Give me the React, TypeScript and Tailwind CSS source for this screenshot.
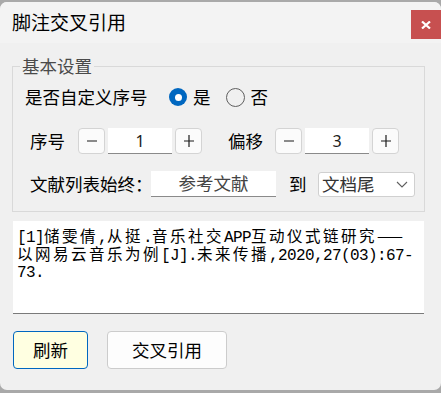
import React from 'react';

const ui = { fontFamily: '"Noto Sans CJK SC", "Microsoft YaHei", sans-serif' };

// SimSun-like: half-width Latin is monospaced, CJK full-width (18px advance)
function RefLine({ text }: { text: string }) {
  const runs = text.match(/[\x20-\x7e]+|[^\x20-\x7e]+/g) || [];
  return (
    <div className="whitespace-nowrap h-[17.5px] leading-[17.5px]">
      {runs.map((r, i) =>
        /^[\x20-\x7e]/.test(r) ? (
          <span
            key={i}
            className="text-[16px] tracking-[-0.6px]"
            style={{ fontFamily: '"Liberation Mono", monospace' }}
          >
            {r}
          </span>
        ) : (
          <span
            key={i}
            className="text-[15.5px] tracking-[2.5px]"
            style={{ fontFamily: '"Noto Sans CJK SC", sans-serif' }}
          >
            {r}
          </span>
        )
      )}
    </div>
  );
}

function StepButton({ sign }: { sign: '-' | '+' }) {
  return (
    <button className="w-[27px] h-[26px] rounded-[4px] border border-[#d4d4d4] bg-[#fbfbfb] flex items-center justify-center">
      <svg width="14" height="14" viewBox="0 0 14 14">
        <line x1="2" y1="7" x2="12" y2="7" stroke="#1b1b1b" strokeWidth="1.2" />
        {sign === '+' && <line x1="7" y1="1" x2="7" y2="13" stroke="#1b1b1b" strokeWidth="1.2" />}
      </svg>
    </button>
  );
}

function NumberBox({ value }: { value: string }) {
  return (
    <div
      className="w-[64px] h-[26px] bg-white border-b border-[#8a8a8a] flex items-center justify-center text-[16px] text-[#1b1b1b]"
      style={{ fontFamily: '"Noto Sans", sans-serif' }}
    >
      {value}
    </div>
  );
}

export default function App() {
  return (
    <div className="w-[441px] h-[393px] bg-[#a9a9a9] pt-[2px] overflow-hidden" style={ui}>
      <div className="w-[441px] h-[388px] rounded-[7px] bg-[#f0f0f0] overflow-hidden flex flex-col">
        {/* title bar */}
        <div className="h-[41px] bg-[#f3f3f3] flex justify-between shrink-0">
          <div className="pl-[12px] flex items-center text-[19px] text-black">脚注交叉引用</div>
          <div className="mt-[8px] w-[30px] h-[29px] bg-[#c75050] flex items-center justify-center">
            <svg width="10" height="8" viewBox="0 0 10 8">
              <path d="M1 0.5 L9 7.5 M9 0.5 L1 7.5" stroke="#fff" strokeWidth="2.2" />
            </svg>
          </div>
        </div>

        {/* group box */}
        <fieldset className="ml-[12px] mt-[11px] w-[413px] border border-[#d9d9d9] px-0 pb-[14px] pt-[6px] m-0">
          <legend className="ml-[7px] px-[2px] text-[17.5px] leading-[24px] text-[#4a4a4a]">基本设置</legend>

          <div className="h-[26px] flex items-center text-[17.5px] text-black">
            <span className="ml-[12px] w-[144px]">是否自定义序号</span>
            <span className="w-[18px] h-[18px] rounded-full bg-[#0067c0] flex items-center justify-center">
              <span className="w-[7px] h-[7px] rounded-full bg-white" />
            </span>
            <span className="ml-[6px]">是</span>
            <span className="ml-[15px] w-[19px] h-[19px] rounded-full border border-[#5f5f5f]" />
            <span className="ml-[6px]">否</span>
          </div>

          <div className="h-[26px] mt-[18px] flex items-center text-[17.5px] text-black">
            <span className="ml-[17px] w-[48px]">序号</span>
            <StepButton sign="-" />
            <div className="ml-[3px]"><NumberBox value="1" /></div>
            <div className="ml-[3px]"><StepButton sign="+" /></div>
            <span className="ml-[26px] w-[47px]">偏移</span>
            <StepButton sign="-" />
            <div className="ml-[3px]"><NumberBox value="3" /></div>
            <div className="ml-[3px]"><StepButton sign="+" /></div>
          </div>

          <div className="h-[26px] mt-[17px] flex items-center text-[17.5px] text-black">
            <span className="ml-[17px] w-[121px] whitespace-nowrap">文献列表始终：</span>
            <div className="w-[125px] h-[26px] bg-white border-b border-[#8a8a8a] flex items-center justify-center text-[#444]">
              参考文献
            </div>
            <span className="ml-[13px] w-[29px]">到</span>
            <div className="w-[97px] h-[25px] bg-white border border-[#d0d0d0] rounded-[3px] flex items-center justify-between pl-[3px] pr-[6px] text-[#333]">
              <span>文档尾</span>
              <svg width="12" height="7" viewBox="0 0 12 7">
                <path d="M1 1 L6 6 L11 1" fill="none" stroke="#606060" strokeWidth="1.1" />
              </svg>
            </div>
          </div>
        </fieldset>

        {/* result text */}
        <div className="ml-[13px] mt-[9px] w-[411px] h-[93px] bg-white border-b border-[#7a7a7a] pl-[4px] pt-[6px] text-black">
          <RefLine text="[1]储雯倩,从挺.音乐社交APP互动仪式链研究——" />
          <RefLine text="以网易云音乐为例[J].未来传播,2020,27(03):67-" />
          <RefLine text="73." />
        </div>

        {/* buttons */}
        <div className="ml-[13px] mt-[17px] flex gap-[19px]">
          <button className="w-[75px] h-[38px] rounded-[4px] border border-[#0067c0] bg-[#ffffe1] text-[17.5px] text-black">
            刷新
          </button>
          <button className="w-[120px] h-[38px] rounded-[4px] border border-[#cccccc] bg-[#fdfdfd] text-[17.5px] text-black">
            交叉引用
          </button>
        </div>
      </div>
    </div>
  );
}
